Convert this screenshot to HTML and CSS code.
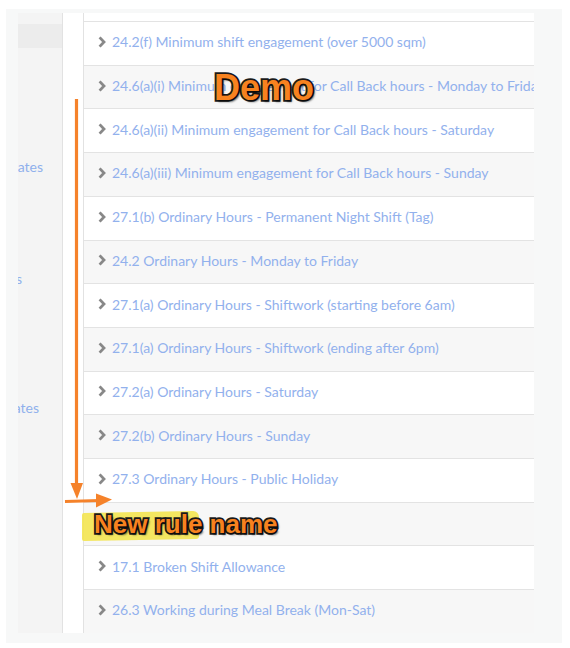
FILE: index.html
```html
<!DOCTYPE html>
<html lang="en">
<head>
<meta charset="utf-8">
<title>Rules</title>
<link rel="stylesheet" href="styles.css">
</head>
<body>
<div class="frame">
  <aside class="sidebar">
    <div class="side-bar-active"></div>
    <div class="side-item item-a"><span>Penalty Rates</span></div>
    <div class="side-item item-b"><span>Allowances</span></div>
    <div class="side-item item-c"><span>Overtime Rates</span></div>
  </aside>
  <div class="gutter"></div>
  <main class="list">
    <div class="row"><svg class="chev" viewBox="0 0 8 12"><polyline points="1.6,1.4 6,6 1.6,10.6"/></svg><span class="label">24.2(f) Minimum shift engagement (over 5000 sqm)</span></div>
    <div class="row"><svg class="chev" viewBox="0 0 8 12"><polyline points="1.6,1.4 6,6 1.6,10.6"/></svg><span class="label">24.6(a)(i) Minimum engagement for Call Back hours - Monday to Friday</span></div>
    <div class="row"><svg class="chev" viewBox="0 0 8 12"><polyline points="1.6,1.4 6,6 1.6,10.6"/></svg><span class="label">24.6(a)(ii) Minimum engagement for Call Back hours - Saturday</span></div>
    <div class="row"><svg class="chev" viewBox="0 0 8 12"><polyline points="1.6,1.4 6,6 1.6,10.6"/></svg><span class="label">24.6(a)(iii) Minimum engagement for Call Back hours - Sunday</span></div>
    <div class="row"><svg class="chev" viewBox="0 0 8 12"><polyline points="1.6,1.4 6,6 1.6,10.6"/></svg><span class="label">27.1(b) Ordinary Hours - Permanent Night Shift (Tag)</span></div>
    <div class="row"><svg class="chev" viewBox="0 0 8 12"><polyline points="1.6,1.4 6,6 1.6,10.6"/></svg><span class="label">24.2 Ordinary Hours - Monday to Friday</span></div>
    <div class="row"><svg class="chev" viewBox="0 0 8 12"><polyline points="1.6,1.4 6,6 1.6,10.6"/></svg><span class="label">27.1(a) Ordinary Hours - Shiftwork (starting before 6am)</span></div>
    <div class="row"><svg class="chev" viewBox="0 0 8 12"><polyline points="1.6,1.4 6,6 1.6,10.6"/></svg><span class="label">27.1(a) Ordinary Hours - Shiftwork (ending after 6pm)</span></div>
    <div class="row"><svg class="chev" viewBox="0 0 8 12"><polyline points="1.6,1.4 6,6 1.6,10.6"/></svg><span class="label">27.2(a) Ordinary Hours - Saturday</span></div>
    <div class="row"><svg class="chev" viewBox="0 0 8 12"><polyline points="1.6,1.4 6,6 1.6,10.6"/></svg><span class="label">27.2(b) Ordinary Hours - Sunday</span></div>
    <div class="row"><svg class="chev" viewBox="0 0 8 12"><polyline points="1.6,1.4 6,6 1.6,10.6"/></svg><span class="label">27.3 Ordinary Hours - Public Holiday</span></div>
    <div class="row row-new"></div>
    <div class="row"><svg class="chev" viewBox="0 0 8 12"><polyline points="1.6,1.4 6,6 1.6,10.6"/></svg><span class="label">17.1 Broken Shift Allowance</span></div>
    <div class="row"><svg class="chev" viewBox="0 0 8 12"><polyline points="1.6,1.4 6,6 1.6,10.6"/></svg><span class="label">26.3 Working during Meal Break (Mon-Sat)</span></div>
  </main>

  <div class="highlight"></div>
  <div class="callout callout-new">New rule name</div>
  <div class="callout callout-demo">Demo</div>
  <svg class="arrows" viewBox="0 0 570 648" width="570" height="648">
    <line class="shaft" x1="76.5" y1="99" x2="76.5" y2="487"/>
    <polygon class="head" points="70.5,483 83,483 77,499"/>
    <line class="shaft" x1="65" y1="501.5" x2="100" y2="500.5"/>
    <polygon class="head" points="96,493.5 112,499.5 96,507.5"/>
  </svg>
</div>
</body>
</html>
```

FILE: styles.css
```css
* { box-sizing: border-box; }

html, body {
  margin: 0;
  padding: 0;
  background: #ffffff;
}

body {
  font-family: "Lato", "Liberation Sans", sans-serif;
}

.frame {
  position: relative;
  margin: 9px 0 0 6px;
  width: 556px;
  height: 634px;
  background: #f7f8f8;
  padding: 4px 28px 10px 12px;
  display: flex;
}

.sidebar {
  width: 45px;
  flex: none;
  background: #f4f4f4;
  border-right: 1px solid #e2e2e2;
  display: flex;
  flex-direction: column;
}

.side-bar-active {
  margin-top: 11px;
  height: 24px;
  background: #ececec;
}

.side-item {
  height: 20px;
  display: flex;
  justify-content: flex-end;
  align-items: center;
  overflow: hidden;
  white-space: nowrap;
  font-size: 14px;
  color: #8fb0ec;
}

.item-a { margin-top: 108px; padding-right: 19px; }
.item-b { margin-top: 92px; padding-right: 40px; }
.item-c { margin-top: 109px; padding-right: 23px; }

.gutter {
  width: 21px;
  flex: none;
  background: #ffffff;
  border-right: 1px solid #e2e2e2;
}

.list {
  width: 450px;
  flex: none;
  background: #ffffff;
  padding-top: 8px;
  display: flex;
  flex-direction: column;
  overflow: hidden;
}

.row {
  height: 43.71px;
  flex: none;
  border-top: 1px solid #e3e3e3;
  display: flex;
  align-items: center;
  padding-left: 14px;
  padding-bottom: 3px;
  white-space: nowrap;
  overflow: hidden;
  background: #ffffff;
}

.row:nth-child(even) {
  background: #f7f7f7;
}

.chev {
  width: 8px;
  height: 12px;
  flex: none;
  margin-right: 6px;
}

.chev polyline {
  fill: none;
  stroke: #888888;
  stroke-width: 2.8;
  stroke-linecap: butt;
  stroke-linejoin: miter;
}

.label {
  font-size: 14px;
  color: #92b1ed;
}

.highlight {
  position: absolute;
  left: 76px;
  top: 503px;
  width: 117px;
  height: 28px;
  background: rgba(243, 228, 80, 0.9);
  border-radius: 2px 6px 3px 2px;
  transform: skewY(-1deg);
}

.callout {
  position: absolute;
  font-family: "Liberation Sans", Arial, sans-serif;
  font-weight: bold;
  color: #f7821f;
  -webkit-text-stroke: 3.5px #1a1a1a;
  paint-order: stroke fill;
  text-shadow: 2px 2px 2px rgba(0, 0, 0, 0.6);
  white-space: nowrap;
  line-height: 1;
}

.callout-demo {
  left: 208px;
  top: 61px;
  font-size: 36px;
}

.callout-new {
  left: 88px;
  top: 502px;
  font-size: 26px;
}

.arrows {
  position: absolute;
  left: -6px;
  top: -9px;
  pointer-events: none;
}

.shaft {
  stroke: #f5822a;
  stroke-width: 3.2;
}

.head {
  fill: #f5822a;
}
```
